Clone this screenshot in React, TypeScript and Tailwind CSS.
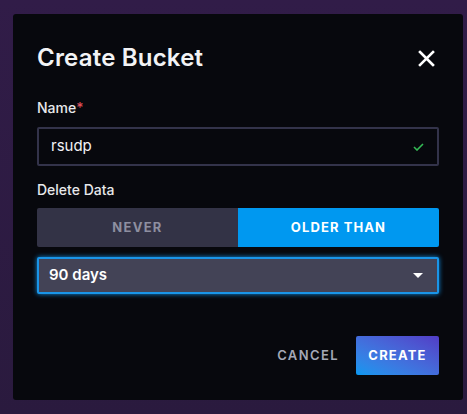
export default function App() {
  return (
    <div
      className="w-[467px] h-[414px] overflow-hidden bg-gradient-to-b from-[#311c48] to-[#2a1a3e] pt-[14px] pl-[13px]"
      style={{ fontFamily: 'Inter, "Noto Sans", sans-serif' }}
    >
      <div className="w-[450px] h-[386px] bg-[#07080d] rounded-[3px] px-6 pt-[28px]">
        {/* Header */}
        <div className="flex items-center justify-between h-8">
          <h1 className="text-2xl font-semibold text-[#f2f3f5] tracking-[0.2px]">Create Bucket</h1>
          <svg width="17" height="17" viewBox="0 0 17 17" className="mr-[4px]">
            <path d="M2 2 L15 15 M15 2 L2 15" stroke="#ffffff" strokeWidth="2.6" strokeLinecap="square" />
          </svg>
        </div>

        {/* Name */}
        <div className="mt-6 text-sm font-medium text-[#e7e8eb] leading-5">
          Name<span className="text-[#dc4e58]">*</span>
        </div>
        <div className="mt-[9px] h-[39px] border-2 border-[#33334a] rounded-[2px] flex items-center justify-between pl-3 pr-[13px]">
          <span className="text-[15px] text-[#f2f3f5]">rsudp</span>
          <svg width="11" height="8" viewBox="0 0 11 8">
            <path d="M1 4 L4 7 L10 1" stroke="#34bb55" strokeWidth="1.6" fill="none" />
          </svg>
        </div>

        {/* Delete Data */}
        <div className="mt-[14px] text-sm font-medium text-[#e7e8eb] leading-5">Delete Data</div>
        <div className="mt-2 h-[39px] flex rounded-[2px] overflow-hidden">
          <div className="flex-1 bg-[#333346] flex items-center justify-center text-[13px] font-bold tracking-[1.3px] text-[#8e8fa0]">
            NEVER
          </div>
          <div className="flex-1 bg-[#0098f0] flex items-center justify-center text-[13px] font-bold tracking-[1.1px] text-white">
            OLDER THAN
          </div>
        </div>

        <div className="mt-[10px] h-[37px] bg-[#434356] border-2 border-[#1a95e8] rounded-[2px] shadow-[0_0_5px_#0f8ee0] flex items-center justify-between pl-[10px] pr-[14px]">
          <span className="text-[15px] font-semibold text-white">90 days</span>
          <svg width="10" height="6" viewBox="0 0 10 6">
            <path d="M0 0 L10 0 L5 5 Z" fill="#ffffff" />
          </svg>
        </div>

        {/* Footer */}
        <div className="mt-[42px] flex items-center justify-end gap-[17px]">
          <button className="text-[13px] font-semibold tracking-[1.4px] text-[#a4a8b6] px-0">CANCEL</button>
          <button className="h-[39px] w-[83px] rounded-[2px] bg-gradient-to-tr from-[#0098f0] to-[#513cc6] text-[13px] font-bold tracking-[1.2px] text-white">
            CREATE
          </button>
        </div>
      </div>
    </div>
  );
}
